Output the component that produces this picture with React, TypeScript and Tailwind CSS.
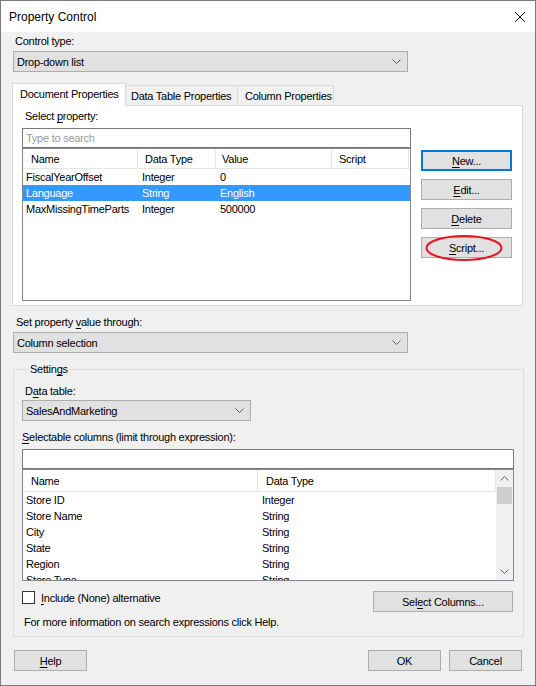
import React from "react";

function U({ children }: { children: React.ReactNode }) {
  return <span className="underline decoration-1 underline-offset-[2px]">{children}</span>;
}

function Chevron({ up = false }: { up?: boolean }) {
  return (
    <svg width="9" height="5" viewBox="0 0 9 5" className="shrink-0">
      <path
        d={up ? "M0.5 4.5 L4.5 0.5 L8.5 4.5" : "M0.5 0.5 L4.5 4.5 L8.5 0.5"}
        fill="none"
        stroke="#606060"
        strokeWidth="1"
      />
    </svg>
  );
}

function Combo({ value, className }: { value: string; className: string }) {
  return (
    <div
      className={`h-[21px] flex items-center justify-between pl-[3px] pr-[6px] bg-[#e1e1e1] border border-[#adadad] ${className}`}
    >
      <span>{value}</span>
      <Chevron />
    </div>
  );
}

function Btn({ children, className = "" }: { children: React.ReactNode; className?: string }) {
  return (
    <div className={`h-[21px] flex items-center justify-center bg-[#e1e1e1] border border-[#adadad] ${className}`}>
      {children}
    </div>
  );
}

const props = [
  { name: "FiscalYearOffset", type: "Integer", value: "0" },
  { name: "Language", type: "String", value: "English", selected: true },
  { name: "MaxMissingTimeParts", type: "Integer", value: "500000" },
];

const columns = [
  { name: "Store ID", type: "Integer" },
  { name: "Store Name", type: "String" },
  { name: "City", type: "String" },
  { name: "State", type: "String" },
  { name: "Region", type: "String" },
  { name: "Store Type", type: "String" },
];

export default function App() {
  return (
    <div className="w-[536px] h-[686px] border border-[#7a7a7a] bg-[#f0f0f0] flex flex-col font-['Liberation_Sans',Arial,sans-serif] text-[11px] tracking-[-0.25px] leading-[14px] text-black overflow-hidden">
      {/* Title bar */}
      <div className="h-[31px] shrink-0 bg-white flex items-center justify-between pl-[8px] pr-[10px]">
        <span className="text-[12px] tracking-normal">Property Control</span>
        <svg width="10" height="10" viewBox="0 0 10 10">
          <path d="M0 0 L10 10 M10 0 L0 10" stroke="#111" strokeWidth="1" />
        </svg>
      </div>

      {/* Body */}
      <div className="flex flex-col pl-[11px] pt-[2px]">
        <div className="ml-[3px] h-[14px]">Control type:</div>
        <Combo value="Drop-down list" className="mt-[3px] ml-[1px] w-[395px]" />

        {/* Tabs */}
        <div className="flex items-end h-[23px] mt-[11px] -mb-px relative z-10">
          <div className="w-[114px] h-[23px] bg-white border border-b-0 border-[#d9d9d9] flex items-center pl-[7px] pb-[2px]">
            Document Properties
          </div>
          <div className="w-[112px] h-[20px] mb-px border-t border-r border-[#d9d9d9] flex items-center pl-[5px]">
            Data Table Properties
          </div>
          <div className="w-[96px] h-[20px] mb-px border-t border-r border-[#d9d9d9] flex items-center pl-[7px]">
            Column Properties
          </div>
        </div>

        {/* Tab panel */}
        <div className="w-[511px] h-[201px] bg-white border border-[#d9d9d9] flex flex-col pl-[9px] pt-[3px]">
          <div className="ml-[3px] h-[14px]">
            Select <U>p</U>roperty:
          </div>
          <div className="flex mt-[5px]">
            <div className="w-[389px] flex flex-col">
              <div className="h-[20px] border border-[#7a7a7a] flex items-center pl-[3px] text-[#9a9a9a]">
                Type to search
              </div>
              <div className="h-[153px] border border-[#828790] flex flex-col">
                <div className="h-[20px] flex border-b border-[#e5e5e5]">
                  <div className="w-[115px] border-r border-[#e5e5e5] flex items-center pl-[8px]">Name</div>
                  <div className="w-[78px] border-r border-[#e5e5e5] flex items-center pl-[7px]">Data Type</div>
                  <div className="w-[116px] border-r border-[#e5e5e5] flex items-center pl-[6px]">Value</div>
                  <div className="w-[77px] border-r border-[#e5e5e5] flex items-center pl-[7px]">Script</div>
                </div>
                {props.map((p) => (
                  <div
                    key={p.name}
                    className={`h-[16px] flex items-center ${p.selected ? "bg-[#3399ff] text-white" : ""}`}
                  >
                    <div className="w-[115px] pl-[3px]">{p.name}</div>
                    <div className="w-[78px] pl-[4px]">{p.type}</div>
                    <div className="w-[116px] pl-[4px]">{p.value}</div>
                  </div>
                ))}
              </div>
            </div>

            <div className="ml-[10px] mt-[22px] w-[91px] flex flex-col gap-[8px]">
              <div className="h-[21px] flex items-center justify-center bg-[#e1e1e1] border-2 border-[#0078d7]">
                <span>
                  <U>N</U>ew...
                </span>
              </div>
              <Btn>
                <span>
                  <U>E</U>dit...
                </span>
              </Btn>
              <Btn>
                <span>
                  <U>D</U>elete
                </span>
              </Btn>
              <div className="relative">
                <Btn>
                  <span>
                    <U>S</U>cript...
                  </span>
                </Btn>
                <svg
                  width="80"
                  height="30"
                  viewBox="0 0 80 30"
                  className="absolute left-[3px] top-[-3px] pointer-events-none"
                >
                  <ellipse cx="40" cy="14" rx="37.5" ry="12" fill="none" stroke="#e5141e" strokeWidth="2" />
                </svg>
              </div>
            </div>
          </div>
        </div>

        <div className="ml-[4px] mt-[9px] h-[14px]">
          Set property <U>v</U>alue through:
        </div>
        <Combo value="Column selection" className="mt-[3px] ml-[1px] w-[395px]" />

        {/* Settings group */}
        <fieldset className="mt-[9px] ml-[1px] w-[511px] border border-[#dcdcdc] pl-[8px] pb-[7px] flex flex-col">
          <legend className="ml-[7px] px-[1px] h-[14px]">
            Settin<U>g</U>s
          </legend>
          <div className="ml-[3px] mt-[8px] h-[14px]">
            D<U>a</U>ta table:
          </div>
          <Combo value="SalesAndMarketing" className="mt-[2px] w-[229px]" />

          <div className="mt-[9px] h-[14px]">
            <U>S</U>electable columns (limit through expression):
          </div>
          <div className="mt-[5px] w-[492px] h-[20px] bg-white border border-[#7a7a7a]" />
          <div className="w-[492px] h-[112px] bg-white border border-[#828790] flex">
            <div className="w-[473px] flex flex-col overflow-hidden">
              <div className="h-[22px] shrink-0 flex border-b border-[#e5e5e5]">
                <div className="w-[235px] border-r border-[#e5e5e5] flex items-center pl-[8px]">Name</div>
                <div className="w-[238px] border-r border-[#e5e5e5] flex items-center pl-[8px]">Data Type</div>
              </div>
              {columns.map((c) => (
                <div key={c.name} className="h-[16px] shrink-0 flex items-center">
                  <div className="w-[235px] pl-[3px]">{c.name}</div>
                  <div className="pl-[4px]">{c.type}</div>
                </div>
              ))}
            </div>
            <div className="w-[17px] bg-[#f0f0f0] flex flex-col">
              <div className="h-[17px] flex items-center justify-center">
                <Chevron up />
              </div>
              <div className="h-[17px] mx-[1px] bg-[#cdcdcd]" />
              <div className="flex-1" />
              <div className="h-[17px] flex items-center justify-center">
                <Chevron />
              </div>
            </div>
          </div>

          <div className="mt-[10px] w-[492px] flex justify-between items-start">
            <div className="flex items-center h-[13px]">
              <div className="w-[13px] h-[13px] bg-white border border-[#333]" />
              <span className="ml-[6px]">
                <U>I</U>nclude (None) alternative
              </span>
            </div>
            <Btn className="w-[140px] mr-[1px]">
              <span>
                Sel<U>e</U>ct Columns...
              </span>
            </Btn>
          </div>
          <div className="ml-[2px] mt-[3px] h-[14px]">For more information on search expressions click Help.</div>
        </fieldset>

        {/* Bottom buttons */}
        <div className="mt-[13px] flex justify-between pr-[13px]">
          <Btn className="ml-[2px] w-[73px]">
            <span>
              <U>H</U>elp
            </span>
          </Btn>
          <div className="flex gap-[8px]">
            <Btn className="w-[73px]">OK</Btn>
            <Btn className="w-[73px]">Cancel</Btn>
          </div>
        </div>
      </div>
    </div>
  );
}
